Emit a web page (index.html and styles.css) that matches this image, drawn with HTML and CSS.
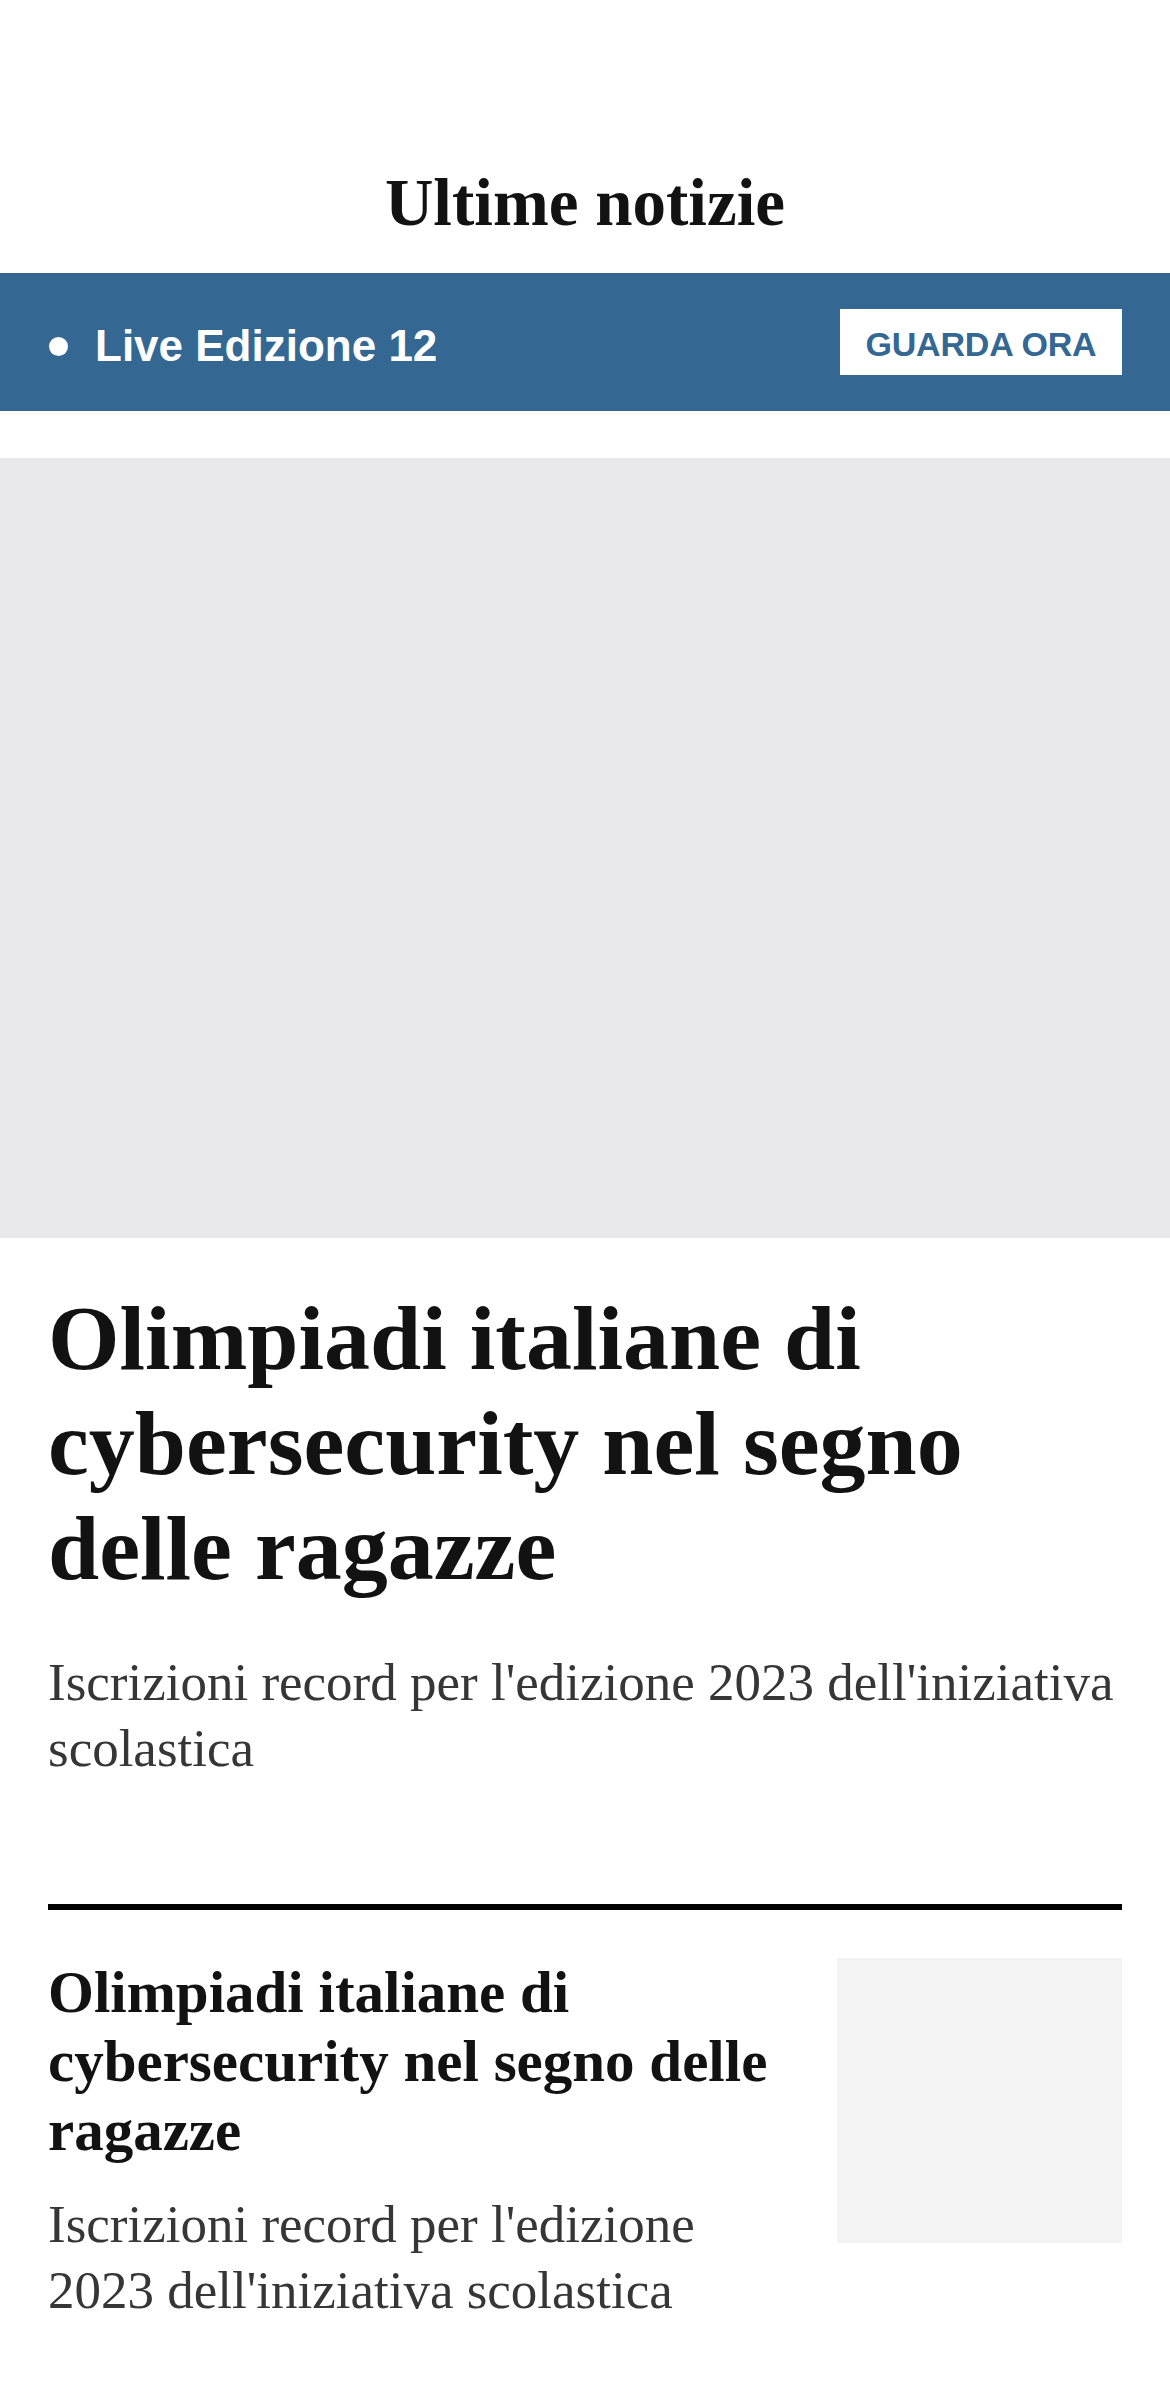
FILE: index.html
```html
<!DOCTYPE html>
<html lang="it">
<head>
<meta charset="utf-8">
<title>Ultime notizie</title>
<link rel="stylesheet" href="styles.css">
</head>
<body>
<header class="page-header">
  <h1 class="page-title">Ultime notizie</h1>
</header>

<section class="live-bar">
  <div class="live-label">
    <span class="live-dot"></span>
    <span class="live-text">Live Edizione 12</span>
  </div>
  <a class="live-button" href="#">GUARDA ORA</a>
</section>

<div class="hero-image"></div>

<article class="lead">
  <h2 class="lead-title">Olimpiadi italiane di cybersecurity nel segno delle ragazze</h2>
  <p class="lead-summary">Iscrizioni record per l'edizione 2023 dell'iniziativa scolastica</p>
</article>

<div class="list">
  <hr class="list-rule">
  <article class="item">
    <div class="item-text">
      <h3 class="item-title">Olimpiadi italiane di cybersecurity nel segno delle ragazze</h3>
      <p class="item-summary">Iscrizioni record per l'edizione 2023 dell'iniziativa scolastica</p>
    </div>
    <div class="item-thumb"></div>
  </article>
</div>
</body>
</html>
```

FILE: styles.css
```css
html, body {
  margin: 0;
  padding: 0;
  background: #ffffff;
}

body {
  font-family: "Liberation Serif", "Times New Roman", serif;
  color: #121212;
}

.page-header {
  padding-top: 162px;
  margin-bottom: 31px;
  text-align: center;
}

.page-title {
  margin: 0;
  font-family: "Liberation Serif", serif;
  font-weight: 700;
  font-size: 67px;
  line-height: 80px;
  color: #121212;
}

.live-bar {
  height: 138px;
  box-sizing: border-box;
  padding: 0 48px;
  background: #346892;
  display: flex;
  align-items: center;
  justify-content: space-between;
}

.live-label {
  display: flex;
  align-items: center;
  gap: 27px;
  padding-top: 8px;
  padding-left: 1px;
}

.live-dot {
  width: 19px;
  height: 19px;
  border-radius: 50%;
  background: #ffffff;
  flex: none;
}

.live-text {
  font-family: "Liberation Sans", Arial, sans-serif;
  font-weight: 700;
  font-size: 44px;
  line-height: 44px;
  color: #ffffff;
}

.live-button {
  width: 282px;
  height: 66px;
  background: #ffffff;
  color: #346892;
  font-family: "Liberation Sans", Arial, sans-serif;
  font-weight: 700;
  font-size: 34px;
  letter-spacing: -0.2px;
  text-decoration: none;
  display: flex;
  align-items: center;
  justify-content: center;
  padding-top: 4px;
  box-sizing: border-box;
}

.hero-image {
  margin-top: 47px;
  height: 780px;
  background: #e8e8ea;
}

.lead {
  padding: 0 48px;
}

.lead-title {
  margin: 48px 0 0;
  font-family: "Liberation Serif", serif;
  font-weight: 700;
  font-size: 92px;
  line-height: 105px;
  color: #121212;
}

.lead-summary {
  margin: 48px 0 0;
  font-family: "Liberation Serif", serif;
  font-weight: 400;
  font-size: 53px;
  line-height: 66px;
  color: #363636;
}

.list {
  padding: 0 48px;
}

.list-rule {
  margin: 123px 0 0;
  border: 0;
  height: 6px;
  background: #000000;
}

.item {
  margin-top: 48px;
  display: flex;
  align-items: flex-start;
  gap: 48px;
}

.item-text {
  flex: 1;
  min-width: 0;
}

.item-title {
  margin: 0;
  font-family: "Liberation Serif", serif;
  font-weight: 700;
  font-size: 59px;
  line-height: 69px;
  color: #121212;
}

.item-summary {
  margin: 26px 0 0;
  font-family: "Liberation Serif", serif;
  font-weight: 400;
  font-size: 53px;
  line-height: 66px;
  color: #363636;
}

.item-thumb {
  flex: none;
  width: 285px;
  height: 285px;
  background: #f3f3f3;
}
```
